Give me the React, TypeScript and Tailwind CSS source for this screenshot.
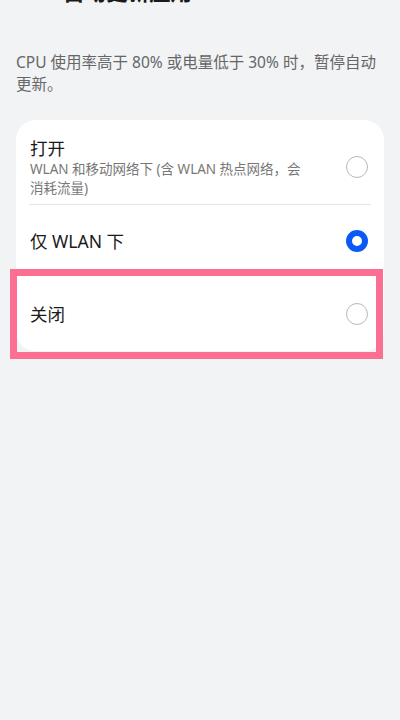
import React from "react";

const font = { fontFamily: "'Noto Sans', 'Noto Sans CJK SC', sans-serif" };

function Radio({ checked }: { checked?: boolean }) {
  if (checked) {
    return <div className="h-[22px] w-[22px] shrink-0 rounded-full border-[6px] border-[#0a59f7] bg-white" />;
  }
  return <div className="h-[22px] w-[22px] shrink-0 rounded-full border-[1.5px] border-[#b9b9b9] bg-white" />;
}

export default function App() {
  return (
    <div className="h-[720px] w-[400px] overflow-hidden bg-[#f1f3f5]" style={font}>
      <div className="-mt-[36px] flex h-[56px] items-center px-4">
        <svg width="24" height="24" viewBox="0 0 24 24" className="ml-[2px] text-[#1a1a1a]">
          <path d="M15 5 L8 12 L15 19" fill="none" stroke="currentColor" strokeWidth="2" strokeLinecap="round" strokeLinejoin="round" />
        </svg>
        <span className="ml-[21px] text-[21.5px] font-bold text-[#1a1a1a]">自动更新应用</span>
      </div>

      <p className="mt-[31px] px-4 text-[15.5px] leading-[22px] text-[#666666]">
        CPU 使用率高于 80% 或电量低于 30% 时，暂停自动更新。
      </p>

      <div className="mx-4 mt-[25px] rounded-[20px] bg-white">
        <div className="flex items-center justify-between pl-[14px] pr-4 pt-4 pb-[6px]">
          <div className="w-[282px]">
            <div className="text-[17.5px] leading-6 text-[#1a1a1a]">打开</div>
            <div className="text-[13.5px] leading-[19px] text-[#777777]">
              WLAN 和移动网络下 (含 WLAN 热点网络，会消耗流量)
            </div>
          </div>
          <Radio />
        </div>
        <div className="mx-[13px] h-px bg-[#e6e6e6]" />
        <div className="flex h-[72px] items-center justify-between pl-[14px] pr-4">
          <span className="text-[17.5px] text-[#1a1a1a]">仅 WLAN 下</span>
          <Radio checked />
        </div>
        <div className="relative flex h-[74px] items-center justify-between pl-[14px] pr-4">
          <span className="text-[17.5px] text-[#1a1a1a]">关闭</span>
          <Radio />
          <div className="absolute -left-[6px] -top-[8px] -bottom-[8px] right-[1px] border-[7px] border-[#fc6e92]" />
        </div>
      </div>
    </div>
  );
}
